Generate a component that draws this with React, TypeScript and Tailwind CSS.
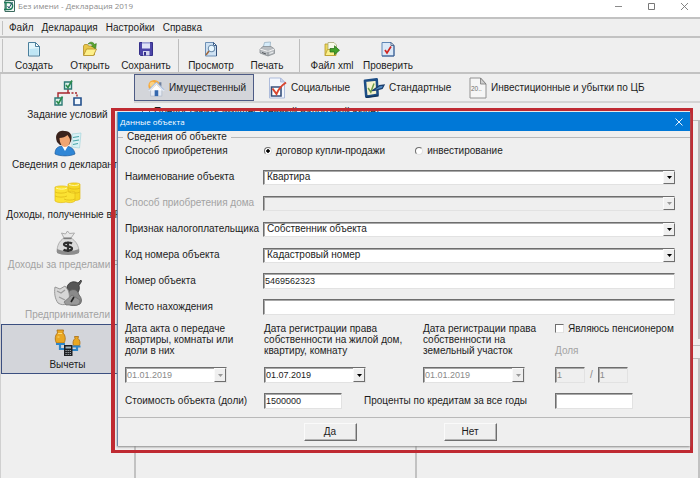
import { useState } from 'react';
import type { ReactNode } from 'react';
import clsx from 'clsx';

const svgProps = { xmlns: 'http://www.w3.org/2000/svg', 'aria-hidden': true };

/* ---------- toolbar icons ---------- */

const NewIcon = () => (
  <svg {...svgProps} viewBox="0 0 16 16" className="size-4">
    <path d="M2.5 1.5h7l4 4v9.5h-11z" fill="#e3f5fb" stroke="#4a7f9c" />
    <path d="M3.5 8l9-1v7h-9z" fill="#bfe6f5" />
    <path d="M9.5 1.5v4h4z" fill="#fff" stroke="#4a7f9c" />
  </svg>
);

const OpenIcon = () => (
  <svg {...svgProps} viewBox="0 0 16 16" className="size-4">
    <path d="M1.5 14V5l1-1.500h3l1 1.500h6V14z" fill="#e9c74a" stroke="#b18e26" strokeWidth=".8" />
    <path d="M1.500 14.500l3-6.500h10l-3 6.500z" fill="#fdf08a" stroke="#b18e26" strokeWidth=".8" />
    <path d="M6 3c2-2.500 5-2.500 6.500.5l1.800-.9-.6 5-4.200-2.400 1.500-.7C10 3 8.500 2.500 6 3z" fill="#5aa52e" stroke="#31731a" strokeWidth=".6" />
  </svg>
);

const SaveIcon = () => (
  <svg {...svgProps} viewBox="0 0 16 16" className="size-4">
    <path d="M1.500 1.500h13v13h-12l-1-1z" fill="#4c45a8" stroke="#35308a" />
    <path d="M4 1.500h8v6H4z" fill="#dfe2f6" />
    <path d="M4 1.500h8v1.500H4z" fill="#b3b8e4" />
    <path d="M5 10h6.500v4.500H5z" fill="#d5d8ef" />
    <path d="M6 11h2v3.500H6z" fill="#35308a" />
  </svg>
);

const PreviewIcon = () => (
  <svg {...svgProps} viewBox="0 0 16 16" className="size-4">
    <path d="M2.500 1.500h8l3 3V15h-11z" fill="#cfe2f3" stroke="#6d8fb5" />
    <path d="M10.500 1.500v3h3z" fill="#fff" stroke="#3f618b" />
    <circle cx="8.500" cy="7.500" r="3.200" fill="#eaf8ff" stroke="#6f8eae" strokeWidth="1.100" />
    <path d="M6 10l-3 4" stroke="#a0673c" strokeWidth="1.600" />
    <path d="M13.500 5v10" stroke="#35507a" />
  </svg>
);

const PrintIcon = () => (
  <svg {...svgProps} viewBox="0 0 16 16" className="size-4">
    <path d="M4 7l1.500-5.500 6-.5L11 7z" fill="#d6ecfa" stroke="#8ea9bd" strokeWidth=".7" />
    <path d="M1 8l3-2.500h8L15.500 8v4.500L9 15l-8-3z" fill="#b9bdc1" stroke="#7d8287" strokeWidth=".7" />
    <path d="M1 8l8 2.500L15.500 8" fill="none" stroke="#f5f5f5" />
    <path d="M9 10.500V15" stroke="#7d8287" strokeWidth=".7" />
    <path d="M3 11.500l4 1.500" stroke="#54585c" />
    <path d="M10.500 12.500l3.500-1.300" stroke="#eceeef" strokeWidth="1.200" />
  </svg>
);

const XmlIcon = () => (
  <svg {...svgProps} viewBox="0 0 16 16" className="size-4">
    <path d="M1 14.500V3h4l1 1.500h6v10z" fill="#ead75d" stroke="#b79a2c" strokeWidth=".8" />
    <path d="M4 1.500h6l2.500 2.500v9H4z" fill="#f8fbe9" stroke="#a8a878" strokeWidth=".8" />
    <path d="M1 14.500l2.500-6h9l-2 6z" fill="#fbf08c" stroke="#b79a2c" strokeWidth=".8" />
    <path d="M6 7.500h4.500V4.800l5 4.500-5 4.400V11H6z" fill="#43a12b" stroke="#1f6b13" strokeWidth=".7" />
  </svg>
);

const CheckDocIcon = () => (
  <svg {...svgProps} viewBox="0 0 16 16" className="size-4">
    <path d="M2 1.500h9l3 3V15H2z" fill="#dbe9f8" stroke="#5f86b5" />
    <path d="M11 1.500v3h3z" fill="#fff" stroke="#35507a" strokeWidth=".8" />
    <path d="M14 5v10H2" fill="none" stroke="#3c5f92" />
    <path d="M5 9l2 3 4-6.500" fill="none" stroke="#d0251f" strokeWidth="1.700" />
  </svg>
);

/* ---------- tab icons ---------- */

const HouseIcon = () => (
  <svg {...svgProps} viewBox="0 0 20 20" className="size-[18px] shrink-0">
    <circle cx="8" cy="7.500" r="6.500" fill="#f6a93b" />
    <circle cx="6" cy="6" r="3" fill="#fbd180" />
    <path d="M4 11.500h12.500V19H4z" fill="#e6ebf4" stroke="#a9b4c6" strokeWidth=".7" />
    <path d="M13.500 3.500h2.500v5l-2.500-2z" fill="#6d7f9e" />
    <path d="M4 12.500l6.500-6.500 6.500 6.500z" fill="#fdfdfe" />
    <path d="M2 13L10.500 4.500 19 13" fill="none" stroke="#dfe7f3" strokeWidth="2.200" />
    <path d="M2 12L10.500 3.500 19 12" fill="none" stroke="#7d9cc8" strokeWidth=".8" />
    <path d="M8.500 12.500h4V19h-4z" fill="#3568ae" />
  </svg>
);

const SocialIcon = () => (
  <svg {...svgProps} viewBox="0 0 20 22" className="h-[22px] w-5 shrink-0">
    <path d="M2.500 1h11l4 4v16h-15z" fill="#f4f7fd" stroke="#a6b5d8" strokeWidth=".9" />
    <path d="M13.500 1v4h4z" fill="#ccd6ee" stroke="#a6b5d8" strokeWidth=".8" />
    <path d="M4.500 10h9.500v9H4.500z" fill="#fff" stroke="#37507c" strokeWidth="1.600" />
    <path d="M5.500 11.500l4 5.500c2-5 5-8.500 9.500-11.500" fill="none" stroke="#d8452e" strokeWidth="2" />
  </svg>
);

const StandardIcon = () => (
  <svg {...svgProps} viewBox="0 0 24 22" className="h-5 w-[22px] shrink-0">
    <path d="M2 3l13-1.500 1 17L3.500 20.500z" fill="#f6f3cf" stroke="#1d4e86" strokeWidth="2.800" strokeLinejoin="round" />
    <path d="M3 21.500l14-2" stroke="#12365f" strokeWidth="1.500" />
    <path d="M5.500 11l3 4.500L12 6" fill="none" stroke="#6d9c4a" strokeWidth="1.600" />
    <path d="M10 14l8-5.500 5-.8-2 3.800-5.500 1.500z" fill="#4f87c1" stroke="#1c3f6e" strokeWidth="1.400" />
  </svg>
);

const InvestIcon = () => (
  <svg {...svgProps} viewBox="0 0 18 22" className="h-[22px] w-[18px] shrink-0">
    <path d="M1 1h10.500L17 7v14H1z" fill="#f6f6f6" stroke="#929292" />
    <path d="M11.500 1v6H17z" fill="#cfcfcf" stroke="#7b7b7b" strokeWidth=".8" />
    <text x="2" y="14" fontSize="6.500" fill="#6f6f6f" fontFamily="Liberation Sans">20..</text>
  </svg>
);

/* ---------- sidebar icons ---------- */

const TreeIcon = () => (
  <svg {...svgProps} viewBox="0 0 28 28" className="size-7">
    <path d="M14 10v4M4 19v-5h10" fill="none" stroke="#a8262c" strokeWidth="1.400" />
    <path d="M14 14h9v5" fill="none" stroke="#a8262c" strokeWidth="1.400" strokeDasharray="2 1.500" />
    <path d="M10.500 3h7v7h-7zM1 19h7v7H1z" fill="#d9efe9" stroke="#2c7a74" strokeWidth="1.400" />
    <path d="M20 19h7v7h-7z" fill="#f3f8fd" stroke="#24508c" strokeWidth="1.600" />
    <path d="M12 6l2 2.500L18 1.500M2.500 22l2 2.500 4-7" fill="none" stroke="#2b8a4b" strokeWidth="1.600" />
  </svg>
);

const PersonIcon = () => (
  <svg {...svgProps} viewBox="0 0 28 28" className="size-7">
    <path d="M18 5l9-1-1.500 15-7.500-1z" fill="#d9f1f5" stroke="#a5d5db" strokeWidth=".7" />
    <path d="M19 8.500l6-1M19 12l6-1M19 15.500l5-1" stroke="#4aa6a8" strokeWidth="1.200" />
    <path d="M1 25c0-6 3-8 9-8s10 2 11 8c-5 2.500-15 2.500-20 0z" fill="#2f86d6" stroke="#1c5c9e" strokeWidth=".7" />
    <path d="M8 17l3 5 3-5z" fill="#fff" />
    <path d="M3 13C0 5 5 1 10 2c6-.5 9 4 7 10l-2 4H6z" fill="#3a221b" />
    <path d="M5.500 9c3 0 6-1 8-3 1 2 2.500 3 2.500 5 0 4-2 7-5 7s-5.500-4-5.500-9z" fill="#f0a572" />
  </svg>
);

const CoinsIcon = () => (
  <svg {...svgProps} viewBox="0 0 28 28" className="size-7">
    <path d="M14 5c3-1.500 10-1.500 12 0v15c-2 2-9 2-12 0z" fill="#f6d824" stroke="#e2bb1a" strokeWidth=".7" />
    <path d="M1 8c3-1.500 10-1.500 13 0v5c2-1 5-1 7 0v9c-2 2-7 2-9 1-3 1-9 1-11-1z" fill="#fbe232" stroke="#e2bb1a" strokeWidth=".7" />
    <path d="M1 13c3 1.500 9 1.500 12 0M1 17c3 1.500 9 1.500 12 0M10 20c3 1.500 8 1.500 11 0M15 9c3 1.500 8 1.500 11 0M15 13c3 1.500 8 1.500 11 0" fill="none" stroke="#e0ba18" strokeWidth=".8" />
    <path d="M2 9c3 1.500 8 1.500 11 0M15 5.500c3 1.300 8 1.300 10 0" fill="none" stroke="#fff7a8" />
  </svg>
);

const MoneyBagIcon = () => (
  <svg {...svgProps} viewBox="0 0 28 28" className="size-7">
    <path d="M10 9L7.500 4l4 1 2-3 2 2.500 5-.5L17 9z" fill="#e8e8e8" stroke="#9c9c9c" strokeWidth=".8" />
    <path d="M10 9h7c5 3 8 8 8 14-4 3-18 3-22 0 0-6 2-11 7-14z" fill="#dcdcdc" stroke="#a2a2a2" strokeWidth=".8" />
    <path d="M3 20c5 2.500 17 2.500 22 0v4c-4 2.500-18 2.500-22 0z" fill="#8d8d8d" />
    <path d="M9.500 9.500h8" stroke="#7d7d7d" strokeWidth="1.400" />
    <path d="M18 14.500c-2-1.400-8-1.500-8 1 0 2.600 8 1.300 8 4 0 2.500-6 2.600-8.500 1.200M14 12.500v10.500" fill="none" stroke="#2f2f2f" strokeWidth="2.200" />
  </svg>
);

const BusinessIcon = () => (
  <svg {...svgProps} viewBox="0 0 28 28" className="size-7">
    <path d="M13 8c1-4 6-7 11-4l3-3 .5 1.500-2.500 4c1 3 0 6-2 8l-10-2z" fill="#565656" stroke="#303030" strokeWidth=".8" />
    <path d="M15 12c5-3 9-1 10 4 3 3 3 7 1 9-4 2-9 2-12 0z" fill="#8a8a8a" stroke="#555" strokeWidth=".8" />
    <path d="M1 8l5 2 5-3 3 4c2 5 2 10-1 14-3 1-6 1-9-1C1 20 0 14 1 8z" fill="#d7d7d7" stroke="#8f8f8f" strokeWidth=".9" />
    <path d="M3 12l4 2 4-3M5 18l6 3" fill="none" stroke="#9a9a9a" strokeWidth="1.200" />
    <path d="M10 23l8-7 8 5c0 3-1 4-3 5H12z" fill="#999" stroke="#6e6e6e" strokeWidth=".7" />
    <path d="M17 23l3-5" stroke="#222" strokeWidth="1.600" />
  </svg>
);

const DeductionIcon = () => (
  <svg {...svgProps} viewBox="0 0 28 28" className="size-7">
    <path d="M6 15v5h6M23 17v4h-6" fill="none" stroke="#2f86c8" strokeWidth="2.200" />
    <path d="M3 1h6.500L9 4c2.500 2 3 7 1 10H2.500C.5 11 1 6 3.500 4z" fill="#e9a722" stroke="#a86d12" strokeWidth=".8" />
    <path d="M20.500 7.500h4l-.5 2c2 1.500 2.500 4.500 1.500 7h-6c-1-2.500-.5-5.500 1.500-7z" fill="#e9a722" stroke="#a86d12" strokeWidth=".8" />
    <path d="M4 4.500h4M3.500 8h2" stroke="#f8d97b" strokeWidth="1.200" />
    <path d="M2 15h9M18.500 17.500h8" stroke="#2f86c8" strokeWidth="1.800" />
    <path d="M10 16h8.500v11H10z" fill="#1d1f22" />
    <path d="M11.500 17.500h5.500v2h-5.500z" fill="#9fb3bd" />
    <path d="M11.500 21.500h5.500M11.500 23.500h5.500M11.500 25.500h5.500" stroke="#a9b1b5" strokeDasharray="1.200 .9" />
  </svg>
);

/* ---------- data ---------- */

const menuItems = ['Файл', 'Декларация', 'Настройки', 'Справка'];

const toolGroups = [
  [
    { label: 'Создать', icon: <NewIcon /> },
    { label: 'Открыть', icon: <OpenIcon /> },
    { label: 'Сохранить', icon: <SaveIcon /> },
  ],
  [
    { label: 'Просмотр', icon: <PreviewIcon /> },
    { label: 'Печать', icon: <PrintIcon /> },
  ],
  [
    { label: 'Файл xml', icon: <XmlIcon /> },
    { label: 'Проверить', icon: <CheckDocIcon /> },
  ],
];

const sections = [
  { label: 'Задание условий', icon: <TreeIcon /> },
  { label: 'Сведения о декларанте', icon: <PersonIcon /> },
  { label: 'Доходы, полученные в РФ', icon: <CoinsIcon /> },
  { label: 'Доходы за пределами РФ', icon: <MoneyBagIcon />, disabled: true },
  { label: 'Предприниматели', icon: <BusinessIcon />, disabled: true },
  { label: 'Вычеты', icon: <DeductionIcon /> },
];

const tabs = [
  { label: 'Имущественный', icon: <HouseIcon />, width: 'w-[120px]' },
  { label: 'Социальные', icon: <SocialIcon />, width: 'w-[96px]' },
  { label: 'Стандартные', icon: <StandardIcon />, width: 'w-[106px]' },
  { label: 'Инвестиционные и убытки по ЦБ', icon: <InvestIcon />, width: 'w-[200px]' },
];

/* ---------- form controls ---------- */

const sunken = 'border border-t-[#6e6e6e] border-l-[#6e6e6e] border-r-[#e2e2e2] border-b-[#e2e2e2] shadow-[inset_1px_1px_0_#a8a8a8]';
const raised = 'border border-t-[#fafafa] border-l-[#fafafa] border-r-[#6e6e6e] border-b-[#6e6e6e] bg-[#efefef]';

const Arrow = ({ disabled }: { disabled?: boolean }) => (
  <svg {...svgProps} viewBox="0 0 5 3" className={clsx('h-[3px] w-[5px]', disabled ? 'fill-[#9a9a9a]' : 'fill-black')}>
    <path d="M0 0h5L2.500 3z" />
  </svg>
);

function TextBox({ id, value, className, disabled, label, autoFocus }: {
  id?: string; value: string; className?: string; disabled?: boolean; label?: string; autoFocus?: boolean;
}) {
  return (
    <input
      id={id}
      type="text"
      aria-label={label}
      defaultValue={value}
      disabled={disabled}
      autoFocus={autoFocus}
      className={clsx('h-4 rounded-none px-px text-[9px] leading-3 outline-none disabled:text-[#8a8a8a]', sunken, className)}
    />
  );
}

function ComboRow({ id, label, value, disabled }: { id: string; label: string; value: string; disabled?: boolean }) {
  return (
    <div className="flex h-4 items-center">
      <label htmlFor={id} className={clsx('w-[138px] shrink-0 whitespace-nowrap', disabled && 'text-[#a3a3a3]')}>{label}</label>
      <div className="relative flex-1">
        <select
          id={id}
          disabled={disabled}
          className={clsx('block h-[15px] w-full appearance-none rounded-none pl-[3px] leading-3 outline-none', sunken, disabled ? 'bg-[#efefef]' : 'bg-white')}
        >
          <option>{value}</option>
        </select>
        <span className={clsx('pointer-events-none absolute inset-y-px right-0 flex w-3 items-center justify-center', raised)}>
          <Arrow disabled={disabled} />
        </span>
      </div>
    </div>
  );
}

function DateBox({ id, value, disabled }: { id: string; value: string; disabled?: boolean }) {
  return (
    <div className={clsx('flex h-4 w-[102px] bg-white', sunken)}>
      <input
        id={id}
        type="text"
        defaultValue={value}
        disabled={disabled}
        className="w-0 flex-1 px-px text-[9px] leading-3 outline-none disabled:text-[#8a8a8a]"
      />
      <button type="button" aria-label="Календарь" disabled={disabled} className={clsx('flex w-3 items-center justify-center', raised)}>
        <Arrow disabled={disabled} />
      </button>
    </div>
  );
}

function DateField({ id, lines, value, disabled }: { id: string; lines: string[]; value: string; disabled?: boolean }) {
  return (
    <div>
      <label htmlFor={id} className="block h-11 leading-[11px] whitespace-nowrap">
        {lines.map(line => <span key={line} className="block">{line}</span>)}
      </label>
      <DateBox id={id} value={value} disabled={disabled} />
    </div>
  );
}

function Radio({ label, checked, onChange }: { label: string; checked: boolean; onChange: () => void }) {
  return (
    <label className="flex items-center gap-1 whitespace-nowrap">
      <input
        type="radio"
        name="method"
        checked={checked}
        onChange={onChange}
        className="size-2 appearance-none rounded-full border border-t-[#6e6e6e] border-l-[#6e6e6e] border-r-[#e2e2e2] border-b-[#e2e2e2] bg-white checked:bg-[radial-gradient(circle,#000_0_35%,#fff_45%)]"
      />
      {label}
    </label>
  );
}

function PushButton({ children, onClick }: { children: ReactNode; onClick?: () => void }) {
  return (
    <button type="button" onClick={onClick} className={clsx('h-[18px] w-[53px] shadow-[inset_-1px_-1px_0_#b5b5b5]', raised)}>
      {children}
    </button>
  );
}

/* ---------- object dialog ---------- */

function ObjectDialog() {
  const [method, setMethod] = useState('purchase');

  return (
    <div role="dialog" aria-labelledby="dialog-title" className="flex flex-col border-l border-[#6f86a8] bg-[#efefef] shadow-[0_1px_2px_#888]">
      <div className="flex h-[19px] items-center justify-between bg-[#0078d7] pl-0.5 pr-[7px] text-white">
        <h2 id="dialog-title" className="font-['Open_Sans',sans-serif] text-[8px]">Данные объекта</h2>
        <button type="button" aria-label="Закрыть">
          <svg {...svgProps} viewBox="0 0 8 8" className="size-2">
            <path d="M.5.5l7 7M7.500.5l-7 7" stroke="#fff" strokeWidth=".9" />
          </svg>
        </button>
      </div>

      <form>
        <fieldset className="flex flex-col pb-2 pl-[7px] pr-[15px]">
          <legend className="-ml-[7px] flex w-full items-center gap-1 whitespace-nowrap leading-3 before:h-px before:w-[5px] before:bg-[#b9b9b9]">
            Сведения об объекте
            <span className="-mr-[22px] h-px flex-1 bg-[#b9b9b9]" />
          </legend>

          <div className="flex h-4 items-center" role="radiogroup" aria-label="Способ приобретения">
            <span className="w-[138px] shrink-0">Способ приобретения</span>
            <div className="flex gap-[30px] pl-px">
              <Radio label="договор купли-продажи" checked={method === 'purchase'} onChange={() => setMethod('purchase')} />
              <Radio label="инвестирование" checked={method === 'invest'} onChange={() => setMethod('invest')} />
            </div>
          </div>

          <div className="mt-2.5 flex flex-col gap-2.5">
            <ComboRow id="object-name" label="Наименование объекта" value="Квартира" />
            <ComboRow id="house-method" label="Способ приобретения дома" value="" disabled />
            <ComboRow id="taxpayer" label="Признак налогоплательщика" value="Собственник объекта" />
            <ComboRow id="number-code" label="Код номера объекта" value="Кадастровый номер" />
            <div className="flex items-center">
              <label htmlFor="number" className="w-[138px] shrink-0">Номер объекта</label>
              <TextBox id="number" value="5469562323" className="flex-1 bg-white" />
            </div>
            <div className="flex items-center">
              <label htmlFor="place" className="w-[138px] shrink-0">Место нахождения</label>
              <TextBox id="place" value="" className="flex-1 bg-white" />
            </div>
          </div>

          <div className="mt-2 grid grid-cols-[139px_159px_132px_1fr]">
            <DateField id="act-date" lines={['Дата акта о передаче', 'квартиры, комнаты или', 'доли в них']} value="01.01.2019" disabled />
            <DateField id="flat-date" lines={['Дата регистрации права', 'собственности на жилой дом,', 'квартиру, комнату']} value="01.07.2019" />
            <DateField id="land-date" lines={['Дата регистрации права', 'собственности на', 'земельный участок']} value="01.01.2019" disabled />
            <div>
              <label className="flex h-[22px] items-start gap-1 whitespace-nowrap leading-[11px]">
                <input type="checkbox" className="mt-px size-[9px] appearance-none border border-t-[#6e6e6e] border-l-[#6e6e6e] border-r-[#e2e2e2] border-b-[#e2e2e2] bg-white" />
                Являюсь пенсионером
              </label>
              <div className="h-[22px] leading-[11px] text-[#a3a3a3]">Доля</div>
              <div className="flex items-center gap-[5px] text-[#8a8a8a]">
                <TextBox value="1" label="Доля, числитель" className="w-[30px]" disabled />
                /
                <TextBox value="1" label="Доля, знаменатель" className="w-[30px]" disabled />
              </div>
            </div>
          </div>

          <div className="mt-2.5 grid grid-cols-[139px_100px_191px_1fr] items-center whitespace-nowrap">
            <label htmlFor="cost">Стоимость объекта (доли)</label>
            <TextBox id="cost" value="1500000" className="w-[78px] bg-white" autoFocus />
            <label htmlFor="interest">Проценты по кредитам за все годы</label>
            <TextBox id="interest" value="" className="w-[78px] bg-white" />
          </div>
        </fieldset>

        <div className="flex h-[29px] items-center justify-center gap-[87px] border-t border-[#b9b9b9] pr-2">
          <PushButton>Да</PushButton>
          <PushButton>Нет</PushButton>
        </div>
      </form>
    </div>
  );
}

/* ---------- main window ---------- */

export default function App() {
  const [active, setActive] = useState('Вычеты');
  const [tab, setTab] = useState('Имущественный');

  return (
    <div className="relative flex min-h-screen flex-col overflow-hidden bg-[#efefef] font-['Liberation_Sans',Arial,sans-serif] text-[10px] leading-3 text-[#1c1c1c]">
      {/* Title bar */}
      <header className="flex h-[17px] items-start justify-between bg-white pl-[3px] pr-3 text-[#8b8b8b]">
        <div className="flex items-center gap-[3px]">
          <svg {...svgProps} viewBox="0 0 12 12" className="size-3">
            <path d="M2 .5h9.500v11H2z" fill="#f4faf7" stroke="#3d6b60" />
            <path d="M1 2.500h4.500c5.500 0 5.500 7 0 7H1M3 2.500v7" fill="none" stroke="#1f7a5a" strokeWidth="1.400" />
            <path d="M4.500 6l1.500 2 3.500-6" fill="none" stroke="#284d6b" strokeWidth="1" />
          </svg>
          <h1 className="font-['Open_Sans',sans-serif] text-[8px]">Без имени - Декларация 2019</h1>
        </div>
        <div className="flex h-3 items-center gap-[26px]">
          <button type="button" aria-label="Свернуть"><svg {...svgProps} viewBox="0 0 7 7" className="size-[7px]"><path d="M0 3.500h7" stroke="#8b8b8b" /></svg></button>
          <button type="button" aria-label="Развернуть"><svg {...svgProps} viewBox="0 0 7 7" className="size-[7px]"><path d="M.5.5h6v6h-6z" fill="none" stroke="#777" /></svg></button>
          <button type="button" aria-label="Закрыть"><svg {...svgProps} viewBox="0 0 7 7" className="size-[7px]"><path d="M0 0l7 7M7 0L0 7" stroke="#777" strokeWidth=".9" /></svg></button>
        </div>
      </header>

      {/* Menu */}
      <nav className="flex h-[19px] items-center gap-2 border-t-2 border-[#c2c2c2] pl-2">
        <span className="-ml-1.5 mr-[-2px] h-3.5 w-px bg-[#c2c2c2]" />
        {menuItems.map(item => <button key={item} type="button">{item}</button>)}
      </nav>

      {/* Toolbar */}
      <div className="flex h-9 items-stretch border-t-2 border-[#c2c2c2] pt-px pl-0.5">
        <span className="mr-[3px] w-px bg-[#c2c2c2]" />
        {toolGroups.map((group, i) => (
          <div key={i} className="flex">
            {i > 0 && <span className="mx-1 w-px bg-[#bdbdbd]" />}
            {group.map(tool => (
              <button key={tool.label} type="button" className="flex w-14 flex-col items-center gap-[3px] whitespace-nowrap pt-0.5">
                {tool.icon}
                {tool.label}
              </button>
            ))}
          </div>
        ))}
      </div>

      <div className="flex flex-1 border-t-2 border-[#c2c2c2]">
        {/* Sections */}
        <aside className="w-[134px] shrink-0 border-l border-[#d0d0d0]">
          {sections.map(s => (
            <button
              key={s.label}
              type="button"
              disabled={s.disabled}
              onClick={() => setActive(s.label)}
              className={clsx(
                'flex h-[50px] w-full flex-col items-center border pt-1 whitespace-nowrap disabled:text-[#a3a3a3]',
                active === s.label ? 'border-[#3b4f80] bg-[#d3d5da]' : 'border-transparent'
              )}
            >
              {s.icon}
              <span className="mt-0.5">{s.label}</span>
            </button>
          ))}
        </aside>

        <main className="flex min-w-0 flex-1 flex-col">
          <div className="flex border-b-2 border-[#d4d4d4]">
            {tabs.map(t => (
              <button
                key={t.label}
                type="button"
                onClick={() => setTab(t.label)}
                className={clsx(
                  'flex h-[27px] items-center gap-1 border pl-3 whitespace-nowrap',
                  t.width,
                  tab === t.label ? 'border-[#4d5b85] bg-[#d3d5da]' : 'border-transparent'
                )}
              >
                {t.icon}
                {t.label}
              </button>
            ))}
          </div>
          <label className="flex h-[17px] items-center gap-1 pl-2">
            <input type="checkbox" defaultChecked className="size-2 appearance-none border border-[#6e6e6e] bg-white" />
            Предоставить имущественный налоговый вычет
          </label>
          <div className="h-[219px] border-t border-r-2 border-[#bdbdbd]" />
          <div className="mt-1.5 h-[14px] border-y border-[#bdbdbd]" />
          <div className="flex flex-1 border-x-2 border-[#c2c2c2]">
            <div className="w-1/2 border-r-2 border-[#c2c2c2]" />
          </div>
        </main>
      </div>

      {/* Modal over the page */}
      <div className="absolute left-[111px] right-[7px] top-[108px] border-[3px] border-l-4 border-[#bf2a32] pb-1 pl-0.5 pt-px">
        <ObjectDialog />
      </div>
    </div>
  );
}
